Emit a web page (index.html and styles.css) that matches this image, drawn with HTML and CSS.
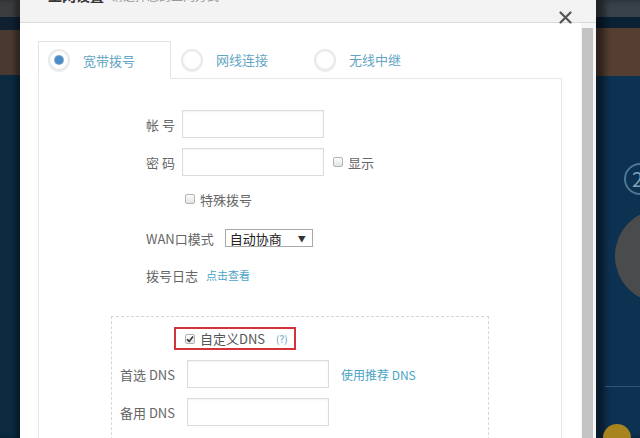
FILE: index.html
```html
<!DOCTYPE html>
<html lang="zh-CN">
<head>
    <meta charset="UTF-8">
    <meta name="viewport" content="width=device-width, initial-scale=1.0">
    <title>上网设置</title>
    <link rel="stylesheet" href="styles.css">
</head>
<body>
    <div class="backdrop-left"></div>

    <div class="modal">
        <div class="modal-header">
            <span class="modal-title">上网设置</span>
            <span class="modal-subtitle">请选择您的上网方式</span>
            <span class="close-btn">
                <svg width="13" height="13" viewBox="0 0 13 13">
                    <path d="M1.5 1.5 L11.5 11.5 M11.5 1.5 L1.5 11.5" stroke="#555" stroke-width="2.2" stroke-linecap="round"/>
                </svg>
            </span>
        </div>

        <div class="modal-body">
            <div class="content">
                <div class="tabs">
                    <div class="tab active"><span class="radio checked"></span><span class="tab-label">宽带拨号</span></div>
                    <div class="tab"><span class="radio"></span><span class="tab-label">网线连接</span></div>
                    <div class="tab"><span class="radio"></span><span class="tab-label">无线中继</span></div>
                </div>

                <div class="panel">
                    <div class="row row-account">
                        <label class="field-label">帐 号</label>
                        <input class="text-input" type="text">
                    </div>
                    <div class="row row-password">
                        <label class="field-label">密 码</label>
                        <input class="text-input" type="password">
                        <span class="checkbox show-box"></span>
                        <span class="check-text">显示</span>
                    </div>
                    <div class="row row-special">
                        <span class="checkbox"></span>
                        <span class="check-text">特殊拨号</span>
                    </div>
                    <div class="row row-wan">
                        <label class="wan-label">WAN口模式</label>
                        <div class="select-box">
                            <span>自动协商</span>
                            <span class="select-arrow">▼</span>
                        </div>
                    </div>
                    <div class="row row-log">
                        <label class="log-label">拨号日志</label>
                        <a class="link small-link" href="#">点击查看</a>
                    </div>

                    <div class="dns-box">
                        <div class="dns-toggle">
                            <span class="checkbox checked">
                                <svg width="8" height="8" viewBox="0 0 8 8">
                                    <path d="M1 4.2 L3.2 6.4 L7 1.4" fill="none" stroke="#333" stroke-width="1.6"/>
                                </svg>
                            </span>
                            <span class="check-text dns-text">自定义DNS</span>
                            <span class="help">(?)</span>
                        </div>
                        <div class="row dns-row">
                            <label class="dns-label">首选 DNS</label>
                            <input class="text-input" type="text">
                            <a class="link dns-link" href="#">使用推荐 DNS</a>
                        </div>
                        <div class="row dns-row">
                            <label class="dns-label">备用 DNS</label>
                            <input class="text-input" type="text">
                        </div>
                    </div>
                </div>
            </div>
            <div class="scrollbar">
                <div class="scroll-thumb"></div>
            </div>
        </div>
    </div>

    <div class="backdrop-right">
        <span class="deco-ring">2</span>
        <span class="deco-disk"></span>
        <span class="deco-line"></span>
        <span class="deco-dot"></span>
    </div>
</body>
</html>
```

FILE: styles.css
```css
html, body {
    margin: 0;
    height: 100%;
}
body {
    display: flex;
    overflow: hidden;
    font-family: "Noto Sans CJK SC", "Liberation Sans", sans-serif;
    background-color: #0c2b42;
}

/* page behind the dialog */
.backdrop-left {
    width: 20px;
    flex-shrink: 0;
    background: linear-gradient(to bottom, #3b3c3d 0, #3b3c3d 17px, #0f2131 17px, #0f2131 30px, #4a3930 30px, #4a3930 75px, #0b2a40 75px);
    box-shadow: inset -5px 0 4px rgba(0, 0, 0, 0.35);
}
.backdrop-right {
    flex: 1;
    position: relative;
    overflow: hidden;
    background: linear-gradient(to bottom, #39424b 0, #39424b 17px, #0a2234 17px, #0a2234 28px, #553f32 28px, #553f32 76px, #0d3150 76px);
    box-shadow: inset 9px 0 6px rgba(0, 0, 0, 0.45);
}
.deco-ring {
    position: absolute;
    left: 28px;
    top: 163px;
    width: 32px;
    height: 32px;
    box-sizing: border-box;
    border: 2px solid #4b7895;
    border-radius: 50%;
    color: #7fa3bb;
    font-size: 20px;
    line-height: 28px;
    padding-left: 6px;
}
.deco-disk {
    position: absolute;
    left: 19px;
    top: 209px;
    width: 94px;
    height: 94px;
    border-radius: 50%;
    background-color: #4a4b4d;
}
.deco-line {
    position: absolute;
    left: 9px;
    right: 0;
    top: 386px;
    height: 1px;
    background-color: #2c5876;
}
.deco-dot {
    position: absolute;
    left: 7px;
    top: 424px;
    width: 28px;
    height: 28px;
    border-radius: 50%;
    background-color: #a8841e;
}

/* dialog */
.modal {
    width: 576px;
    flex-shrink: 0;
    height: 456px;
    margin-top: -18px;
    display: flex;
    flex-direction: column;
    background-color: #fff;
    position: relative;
    overflow: hidden;
}
.modal-header {
    flex-shrink: 0;
    height: 41px;
    box-sizing: border-box;
    padding: 3px 0 0 28px;
    background-color: #f3f3f3;
    border-bottom: 1px solid #dadada;
    display: flex;
    align-items: baseline;
}
.modal-title {
    font-size: 14px;
    font-weight: bold;
    color: #333;
}
.modal-subtitle {
    margin-left: 7px;
    font-size: 12px;
    color: #999;
}
.close-btn {
    position: absolute;
    right: 24px;
    top: 29px;
    width: 13px;
    height: 13px;
}
.close-btn svg {
    display: block;
}
.modal-body {
    flex: 1;
    min-height: 0;
    display: flex;
}
.content {
    flex: 1;
    display: flex;
    flex-direction: column;
    padding: 18px 19px 0 18px;
}
.scrollbar {
    width: 15px;
    padding: 5px 3px 0 1px;
    box-sizing: border-box;
    background-color: #f6f6f6;
}
.scroll-thumb {
    height: 100%;
    background-color: #c3c3c3;
}

/* tabs */
.tabs {
    display: flex;
    flex-shrink: 0;
    border-bottom: 1px solid #e6e6e6;
}
.tab {
    width: 133px;
    height: 37px;
    box-sizing: border-box;
    padding-left: 10px;
    display: flex;
    align-items: center;
}
.tab.active {
    height: 38px;
    margin-bottom: -1px;
    padding-left: 9px;
    border: 1px solid #e3e3e3;
    border-bottom-color: #fff;
    background-color: #fff;
}
.radio {
    width: 22px;
    height: 22px;
    box-sizing: border-box;
    border: 2px solid #e9e9e9;
    border-radius: 50%;
    background: radial-gradient(circle, #fff 0, #fff 55%, #f1f1f1 100%);
    box-shadow: 0 1px 1px rgba(0, 0, 0, 0.08);
    display: flex;
    align-items: center;
    justify-content: center;
}
.radio.checked::after {
    content: "";
    width: 8px;
    height: 8px;
    border-radius: 50%;
    background-color: #4d8cc2;
    box-shadow: 0 0 0 1px #7aaad4;
}
.tab-label {
    margin-left: 13px;
    font-size: 13px;
    color: #62a5c3;
}

/* form */
.panel {
    flex: 1;
    padding-left: 72px;
    border-left: 1px solid #e6e6e6;
    border-right: 1px solid #e6e6e6;
}
.row {
    display: flex;
    align-items: center;
    font-size: 13px;
    color: #666;
}
.row-account {
    margin: 31px 0 0 35px;
}
.row-password {
    margin: 10px 0 0 35px;
}
.row-special {
    height: 20px;
    margin: 13px 0 0 74px;
}
.row-wan {
    height: 18px;
    margin: 20px 0 0 35px;
}
.row-log {
    height: 18px;
    margin: 19px 0 0 35px;
}
.field-label {
    width: 36px;
}
.wan-label {
    margin-right: 11px;
}
.log-label {
    margin-right: 8px;
}
.text-input {
    width: 142px;
    height: 28px;
    box-sizing: border-box;
    margin: 0;
    border: 1px solid #dcdcdc;
    box-shadow: inset 0 1px 2px rgba(0, 0, 0, 0.06);
    background-color: #fff;
}
.checkbox {
    width: 10px;
    height: 10px;
    box-sizing: border-box;
    border: 1px solid #b3b3b3;
    border-radius: 2px;
    background: linear-gradient(#fdfdfd, #e4e4e4);
    display: flex;
    align-items: center;
    justify-content: center;
}
.checkbox svg {
    display: block;
}
.show-box {
    margin-left: 9px;
}
.check-text {
    margin-left: 5px;
    color: #666;
    font-size: 13px;
}
.select-box {
    width: 88px;
    height: 18px;
    box-sizing: border-box;
    padding: 0 6px 0 4px;
    border: 1px solid #a9a9a9;
    background-color: #fff;
    display: flex;
    align-items: center;
    justify-content: space-between;
    color: #222;
    font-size: 13px;
}
.select-arrow {
    font-size: 8px;
    color: #333;
}
.link {
    color: #4aa3c7;
    text-decoration: none;
}
.small-link {
    font-size: 11px;
}

/* custom DNS block */
.dns-box {
    width: 378px;
    height: 200px;
    box-sizing: border-box;
    margin-top: 32px;
    padding-top: 10px;
    border: 1px dashed #d6d6d6;
    border-bottom: none;
}
.dns-toggle {
    width: 122px;
    height: 23px;
    box-sizing: border-box;
    margin-left: 62px;
    padding-left: 9px;
    border: 2px solid #d3343b;
    display: flex;
    align-items: center;
}
.dns-text {
    color: #555;
}
.help {
    margin-left: 11px;
    font-size: 10px;
    color: #5a9fc0;
}
.dns-row {
    margin-top: 10px;
    padding-left: 8px;
}
.dns-label {
    width: 67px;
}
.dns-link {
    margin-left: 12px;
    font-size: 12px;
}
```
